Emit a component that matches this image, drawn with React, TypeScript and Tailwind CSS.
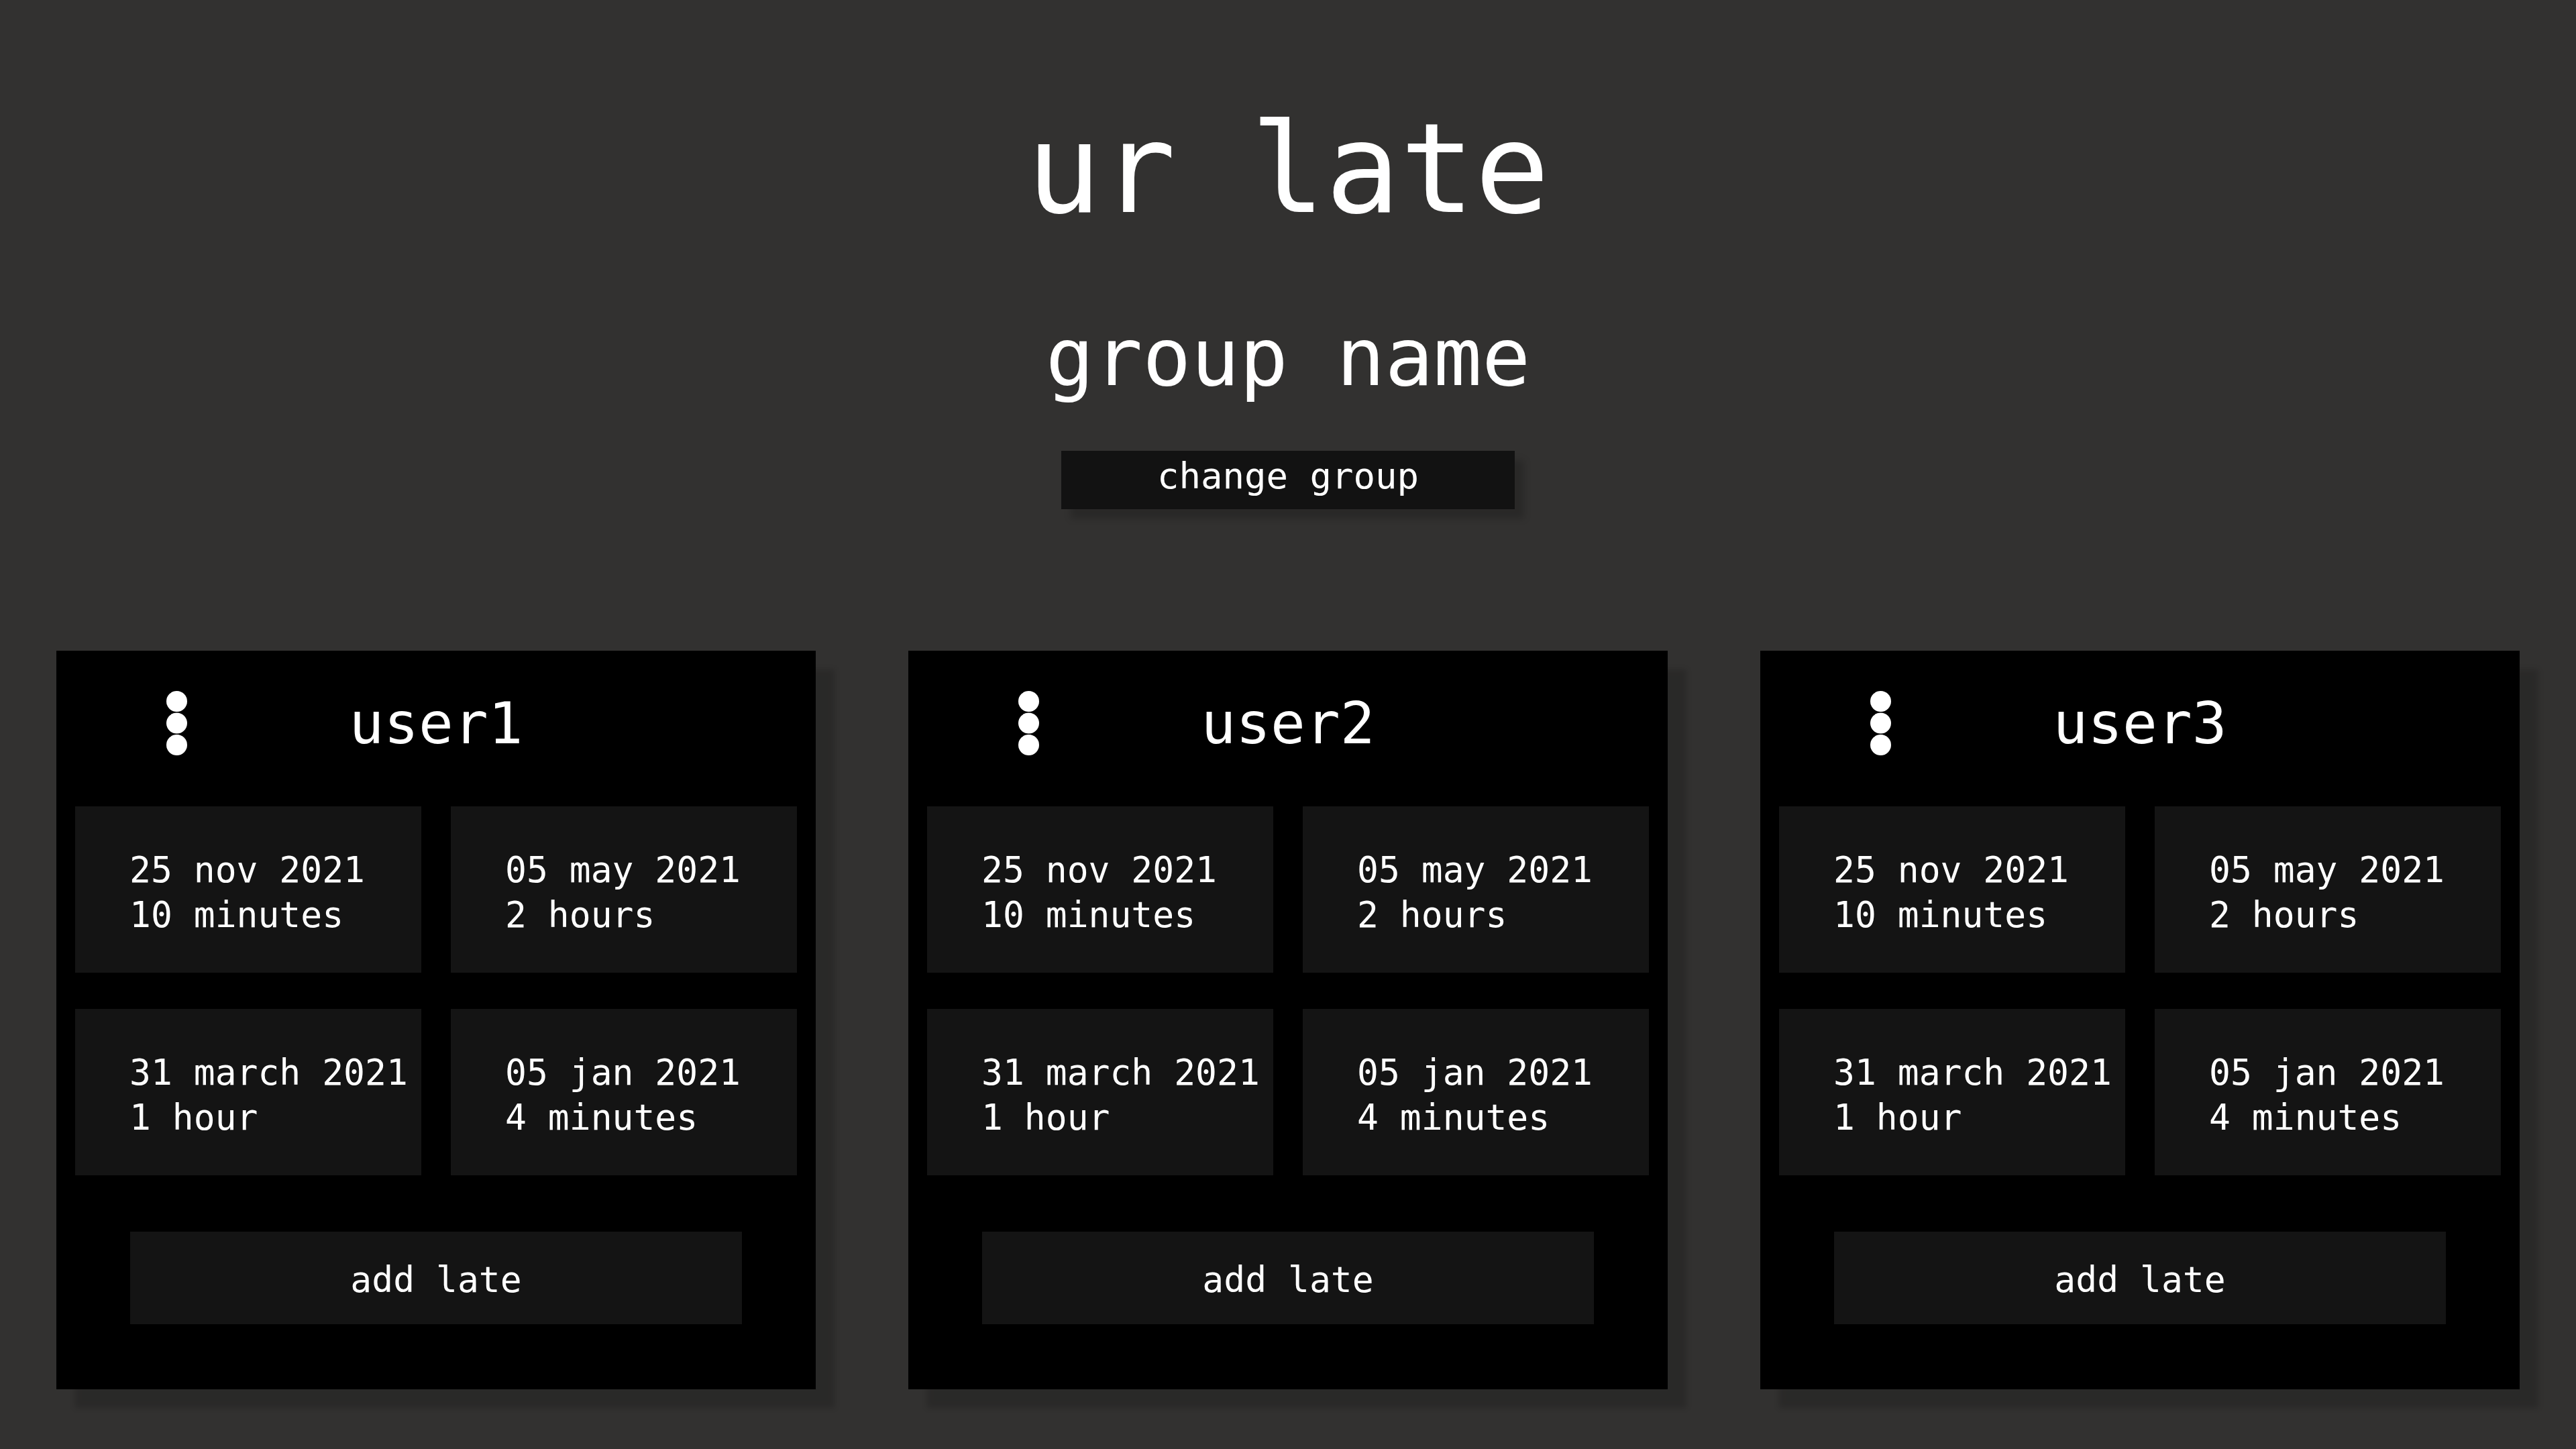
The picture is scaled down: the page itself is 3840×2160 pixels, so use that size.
import React from "react";

type Late = { date: string; dur: string };

const lates: Late[] = [
  { date: "25 nov 2021", dur: "10 minutes" },
  { date: "05 may 2021", dur: "2 hours" },
  { date: "31 march 2021", dur: "1 hour" },
  { date: "05 jan 2021", dur: "4 minutes" },
];

function Dots() {
  return (
    <svg width="31" height="96" viewBox="0 0 31 96" fill="white">
      <circle cx="15.5" cy="15.5" r="15.5" />
      <circle cx="15.5" cy="48" r="15.5" />
      <circle cx="15.5" cy="80.5" r="15.5" />
    </svg>
  );
}

function UserCard({ name }: { name: string }) {
  return (
    <div className="bg-black flex flex-col shadow-[28px_28px_8px_rgba(0,0,0,0.16)]">
      <div className="h-[216px] mb-[16px] grid grid-cols-[1fr_auto_1fr] items-center">
        <div className="pl-[164px] flex items-center">
          <Dots />
        </div>
        <div className="text-[86px] leading-none text-white">{name}</div>
        <div />
      </div>
      <div className="px-[28px] grid grid-cols-2 gap-x-[44px] gap-y-[54px]">
        {lates.map((l, i) => (
          <div key={i} className="h-[248px] bg-[#141414] pl-[81px] pt-[61px] text-[53px] leading-[67px] text-white whitespace-nowrap">
            <div>{l.date}</div>
            <div>{l.dur}</div>
          </div>
        ))}
      </div>
      <div className="mt-[84px] mb-[97px] mx-[110px] h-[138px] bg-[#141414] flex items-center justify-center pt-[6px] text-[53px] leading-[54px] text-white">
        add late
      </div>
    </div>
  );
}

export default function App() {
  return (
    <div className="min-h-screen w-full bg-[#323130] font-['DejaVu_Sans_Mono',monospace] text-white flex flex-col items-center pt-[157px] pb-[89px]">
      <h1 className="text-[185px] leading-[190px] font-normal">ur late</h1>
      <h2 className="mt-[125px] text-[120px] leading-[121px] font-normal">group name</h2>
      <button className="mt-[79px] w-[676px] h-[87px] bg-[#121212] flex items-center justify-center pb-[11px] text-[54px] leading-[54px] text-white shadow-[14px_14px_10px_rgba(0,0,0,0.18)]">
        change group
      </button>
      <div className="mt-[211px] w-full px-[84px] grid grid-cols-3 gap-x-[138px]">
        <UserCard name="user1" />
        <UserCard name="user2" />
        <UserCard name="user3" />
      </div>
    </div>
  );
}
